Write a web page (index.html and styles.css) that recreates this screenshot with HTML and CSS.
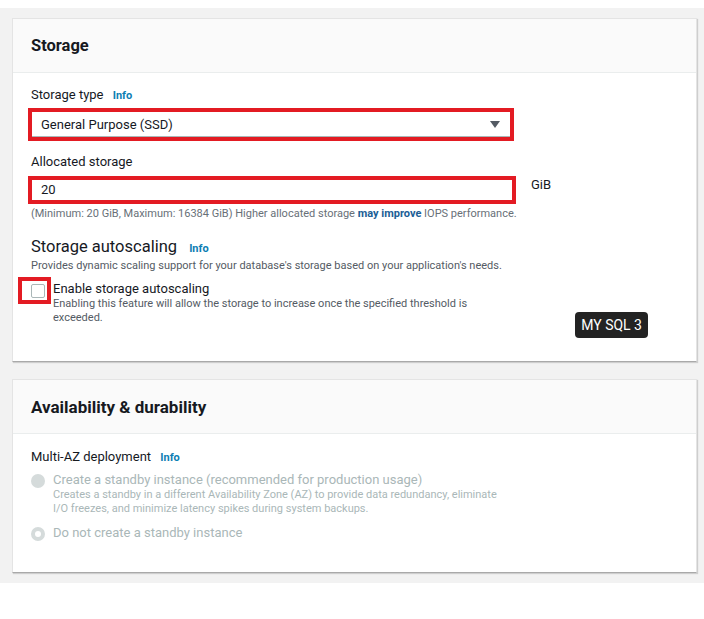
FILE: index.html
```html
<!DOCTYPE html>
<html>
<head>
<meta charset="utf-8">
<link rel="stylesheet" href="styles.css">
</head>
<body>
<div class="page">
  <section class="panel">
    <div class="panel-head"><h2>Storage</h2></div>
    <div class="panel-body">
      <div class="field">
        <div class="label">Storage type <span class="info">Info</span></div>
        <div class="hl hl-select">
          <div class="select">General Purpose (SSD)<span class="caret"></span></div>
        </div>
      </div>
      <div class="field field2">
        <div class="label">Allocated storage</div>
        <div class="input-row">
          <div class="hl hl-input"><div class="input">20</div></div>
          <span class="unit">GiB</span>
        </div>
        <div class="hint">(Minimum: 20 GiB, Maximum: 16384 GiB) Higher allocated storage <b class="link">may improve</b> IOPS performance.</div>
      </div>
      <div class="subsection">
        <div class="subtitle">Storage autoscaling <span class="info">Info</span></div>
        <div class="desc">Provides dynamic scaling support for your database's storage based on your application's needs.</div>
        <div class="check-row">
          <div class="hl hl-check"><span class="checkbox"></span></div>
          <div class="check-text">
            <div class="check-label">Enable storage autoscaling</div>
            <div class="desc narrow">Enabling this feature will allow the storage to increase once the specified threshold is exceeded.</div>
          </div>
          <span class="badge">MY SQL 3</span>
        </div>
      </div>
    </div>
  </section>
  <section class="panel panel2">
    <div class="panel-head"><h2 class="h2b">Availability &amp; durability</h2></div>
    <div class="panel-body body2">
      <div class="label">Multi-AZ deployment <span class="info">Info</span></div>
      <div class="radio-row">
        <span class="radio filled"></span>
        <div>
          <div class="radio-label">Create a standby instance (recommended for production usage)</div>
          <div class="desc muted narrow2">Creates a standby in a different Availability Zone (AZ) to provide data redundancy, eliminate I/O freezes, and minimize latency spikes during system backups.</div>
        </div>
      </div>
      <div class="radio-row row2">
        <span class="radio ring"></span>
        <div class="radio-label">Do not create a standby instance</div>
      </div>
    </div>
  </section>
</div>
</body>
</html>
```
FILE: styles.css
```css
* { box-sizing: border-box; }
body {
  margin: 0;
  background: #fff;
  font-family: Roboto, "Noto Sans", sans-serif;
  color: #16191f;
}
.page {
  margin-top: 8px;
  background: #f2f2f2;
  padding: 10px 7px 10px 12px;
  height: 575px;
}
.panel {
  background: #fff;
  border: 1px solid #e4e4e4;
  border-bottom: 1px solid #a9a9a9;
  box-shadow: 1px 1px 1px rgba(0,0,0,0.15);
}
.panel2 { margin-top: 17px; }
.panel-head {
  background: #fafafa;
  border-bottom: 1px solid #eaeded;
  height: 54px;
  padding: 0 18px;
  display: flex;
  align-items: center;
}
.panel-head h2 {
  margin: 0;
  font-size: 16.5px;
  font-weight: 700;
  color: #16191f;
}
.panel-head .h2b { font-size: 17px; }
.panel-body {
  padding: 14px 18px 0;
  height: 288px;
}
.body2 { height: 138px; padding-top: 15px; }
.label {
  font-size: 13px;
  color: #16191f;
  line-height: 16px;
}
.info {
  font-size: 11px;
  font-weight: 700;
  color: #0d7eb3;
  margin-left: 6px;
}
.hl {
  border: 4px solid #e31b23;
}
.hl-select {
  width: 486px;
  height: 33px;
  margin: 4px 0 0 -3px;
}
.select {
  height: 25px;
  border-bottom: 1px solid #aab7b8;
  display: flex;
  align-items: center;
  justify-content: space-between;
  padding: 0 10px 0 9px;
  font-size: 13px;
}
.caret {
  width: 0; height: 0;
  border-left: 5px solid transparent;
  border-right: 5px solid transparent;
  border-top: 7px solid #545b64;
}
.field2 { margin-top: 13px; }
.input-row {
  display: flex;
  align-items: flex-start;
  margin-top: 6px;
}
.hl-input {
  width: 488px;
  height: 28px;
  margin-left: -3px;
}
.input {
  font-size: 13px;
  padding: 2px 9px;
}
.unit {
  font-size: 13px;
  margin: 1px 0 0 15px;
}
.hint {
  font-size: 11px;
  line-height: 14px;
  color: #687078;
  margin-top: 3px;
}
.link { color: #1b5e96; }
.subsection { margin-top: 16px; }
.subtitle { font-size: 16.5px; line-height: 20px; }
.subtitle .info { margin-left: 8px; }
.desc {
  font-size: 11px;
  color: #545b64;
  line-height: 14px;
}
.check-row {
  display: flex;
  align-items: flex-start;
  margin-top: 4px;
  margin-left: -13px;
}
.hl-check {
  width: 33px;
  height: 27px;
  display: flex;
  align-items: center;
  justify-content: center;
  padding-left: 6px;
}
.checkbox {
  width: 14px;
  height: 14px;
  border: 1px solid #aab7b8;
  border-radius: 2px;
  background: #fff;
}
.check-text { margin-left: 2px; }
.check-label { font-size: 13px; line-height: 16px; margin-top: 4px; }
.narrow { width: 440px; }
.badge {
  margin-left: auto;
  margin-right: 30px;
  margin-top: 35px;
  background: #232323;
  color: #fff;
  font-size: 14px;
  padding: 4px 6px;
  border-radius: 4px;
  line-height: 18px;
}
.radio-row {
  display: flex;
  align-items: flex-start;
  margin-top: 6px;
}
.row2 { margin-top: 9px; }
.radio {
  width: 14px;
  height: 14px;
  border-radius: 50%;
  margin: 2px 8px 0 0;
  flex: none;
}
.radio.filled { background: #d5dbdb; }
.radio.ring { border: 4px solid #d5dbdb; background: #fff; }
.radio-label { font-size: 13px; color: #aab7b8; line-height: 16px; }
.muted { color: #aab7b8; }
.narrow2 { width: 452px; }
```
